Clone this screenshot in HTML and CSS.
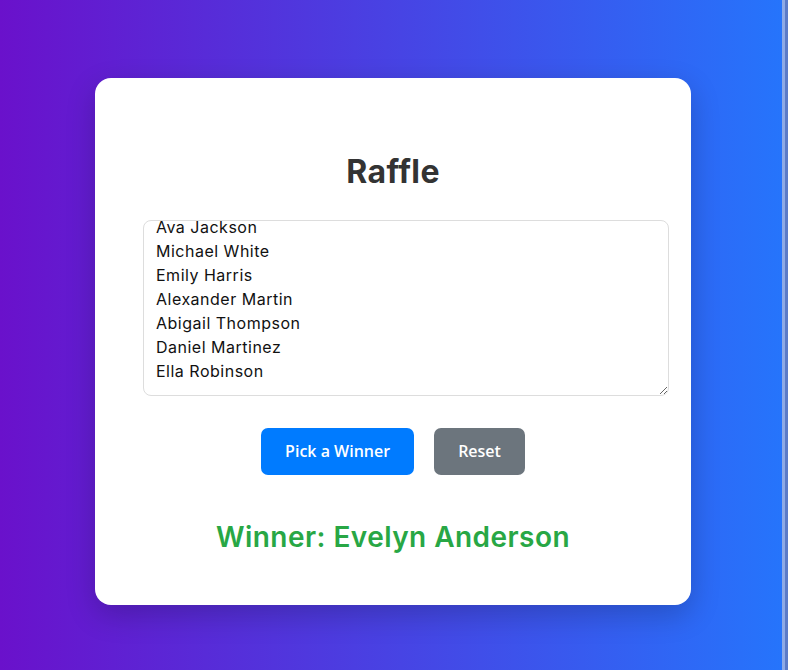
FILE: index.html
```html
<!DOCTYPE html>
<html lang="en">
<head>
<meta charset="utf-8">
<title>Raffle</title>
<link rel="stylesheet" href="styles.css">
</head>
<body>
<main class="page">
  <section class="card">
    <h1 class="title">Raffle</h1>
    <textarea class="names" id="names">John Smith
Emma Johnson
Liam Williams
Olivia Brown
Noah Jones
Sophia Garcia
James Miller
Isabella Davis
Benjamin Rodriguez
Mia Wilson
Evelyn Anderson
Lucas Thomas
Charlotte Taylor
Henry Moore
Ava Jackson
Michael White
Emily Harris
Alexander Martin
Abigail Thompson
Daniel Martinez
Ella Robinson</textarea>
    <div class="actions">
      <button class="btn btn-primary" type="button">Pick a Winner</button>
      <button class="btn btn-secondary" type="button">Reset</button>
    </div>
    <p class="winner">Winner: Evelyn Anderson</p>
  </section>
</main>
<script src="script.js"></script>
</body>
</html>
```

FILE: styles.css
```css
html, body {
  margin: 0;
  padding: 0;
  height: 100%;
}

body {
  font-family: Inter, "Open Sans", sans-serif;
  background: linear-gradient(to right, #6a11cb, #2575fc);
  box-shadow: inset -3px 0 0 #5b7bc8, inset -6px 0 0 #8eaae6;
  overflow: hidden;
}

.page {
  display: flex;
  justify-content: center;
  padding-top: 78px;
  padding-right: 2px;
}

.card {
  width: 500px;
  padding: 48px;
  background: #fff;
  border-radius: 16px;
  box-shadow: 0 10px 30px rgba(0, 0, 0, 0.2);
  display: flex;
  flex-direction: column;
  align-items: stretch;
}

.title {
  margin: 24px 0 26px;
  font-size: 32px;
  line-height: 44px;
  font-weight: 700;
  letter-spacing: 0.4px;
  color: #333;
  text-align: center;
}

.names {
  box-sizing: content-box;
  width: 100%;
  height: 150px;
  padding: 12px;
  margin: 0;
  border: 1px solid #ddd;
  border-radius: 8px;
  font-family: inherit;
  font-size: 16px;
  line-height: 24px;
  letter-spacing: 0.5px;
  color: #111;
  overflow: hidden;
  resize: vertical;
  outline: none;
}

.actions {
  display: flex;
  justify-content: center;
  gap: 20px;
  margin-top: 32px;
}

.btn {
  font-family: "Open Sans", sans-serif;
  font-weight: 600;
  font-size: 16px;
  line-height: 23px;
  padding: 12px 24px;
  border: none;
  border-radius: 7px;
  color: #fff;
  cursor: pointer;
}

.btn-primary {
  background: #007bff;
}

.btn-secondary {
  background: #6c757d;
}

.winner {
  margin: 43px 0 0;
  font-size: 28px;
  line-height: 39px;
  font-weight: 600;
  letter-spacing: 0.45px;
  color: #28a745;
  text-align: center;
}
```

FILE: script.js
```js
var names = document.getElementById('names');
names.scrollTop = names.scrollHeight;
```
